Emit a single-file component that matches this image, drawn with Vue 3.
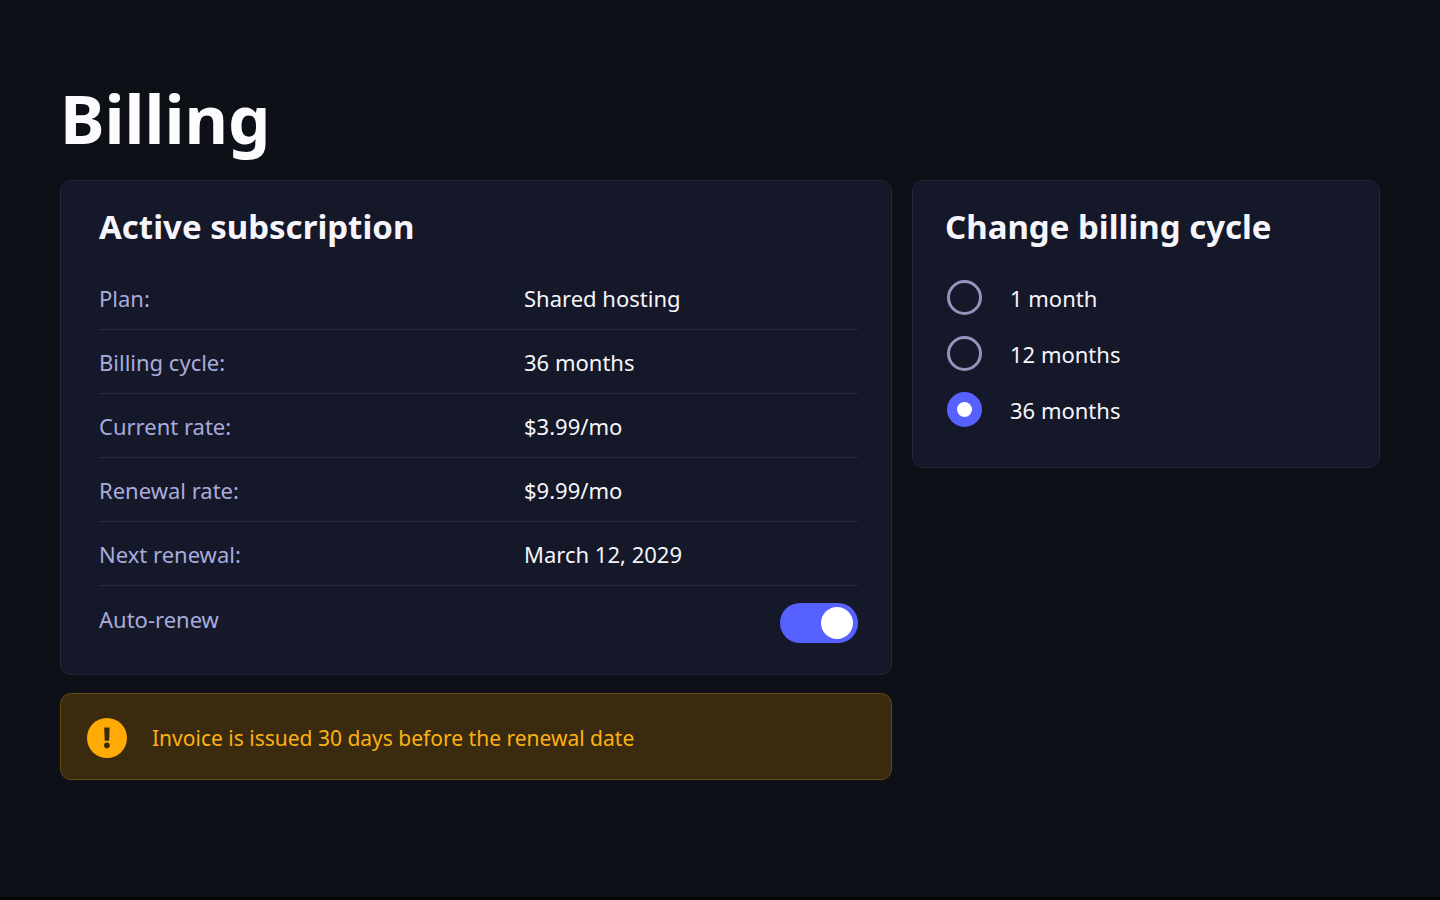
<script setup>
import { ref } from 'vue'

const details = [
  { label: 'Plan:', value: 'Shared hosting' },
  { label: 'Billing cycle:', value: '36 months' },
  { label: 'Current rate:', value: '$3.99/mo' },
  { label: 'Renewal rate:', value: '$9.99/mo' },
  { label: 'Next renewal:', value: 'March 12, 2029' },
]

const cycles = [
  { value: '1', label: '1 month' },
  { value: '12', label: '12 months' },
  { value: '36', label: '36 months' },
]

const cycle = ref('36')
const autoRenew = ref(true)
</script>

<template>
  <main class="page">
    <h1 class="title">Billing</h1>

    <div class="columns">
      <div class="main-column">
        <section class="card subscription" aria-labelledby="subscription-heading">
          <h2 id="subscription-heading" class="heading">Active subscription</h2>
          <dl class="details">
            <div v-for="item in details" :key="item.label" class="row">
              <dt>{{ item.label }}</dt>
              <dd>{{ item.value }}</dd>
            </div>
          </dl>
          <div class="renew">
            <label for="auto-renew">Auto-renew</label>
            <input id="auto-renew" v-model="autoRenew" class="switch" type="checkbox" role="switch" />
          </div>
        </section>

        <aside class="notice">
          <svg class="notice-icon" viewBox="0 0 40 40" aria-hidden="true">
            <circle cx="20" cy="20" r="20" fill="#ffaa05" />
            <path d="M17.2 9.6h5.4l-.5 13.2h-4.4z" fill="#3a2a0f" />
            <circle cx="19.9" cy="27.4" r="2.8" fill="#3a2a0f" />
          </svg>
          <p>Invoice is issued 30 days before the renewal date</p>
        </aside>
      </div>

      <section class="card cycle" aria-labelledby="cycle-heading">
        <h2 id="cycle-heading" class="heading">Change billing cycle</h2>
        <div class="options" role="radiogroup" aria-labelledby="cycle-heading">
          <label v-for="option in cycles" :key="option.value" class="option">
            <input v-model="cycle" class="radio" type="radio" name="cycle" :value="option.value" />
            <span>{{ option.label }}</span>
          </label>
        </div>
      </section>
    </div>
  </main>
</template>

<style>
body {
  background: #0d1017;
}
</style>

<style scoped>
.page {
  box-sizing: border-box;
  min-height: 100vh;
  padding: 70px 60px 48px;
  border-bottom: 3px solid #030408;
  color: #f5f5fb;
  font-family: "Noto Sans", "Open Sans", sans-serif;
  font-size: 22px;
  line-height: 32px;
}

.title {
  margin: 0 0 14px;
  font-size: 67px;
  font-weight: 700;
  line-height: 96px;
  color: #fcfcfe;
}

.columns {
  display: grid;
  grid-template-columns: 16fr 9fr;
  gap: 20px;
  align-items: start;
}

.main-column {
  display: grid;
  gap: 18px;
}

.card {
  border: 1px solid #22263a;
  border-radius: 11px;
  background: #151828;
}

.subscription {
  padding: 22px 33px 31px 38px;
}

.cycle {
  padding: 22px 32px 40px;
}

.heading {
  margin: 0;
  font-size: 33px;
  font-weight: 700;
  line-height: 48px;
}

.details {
  margin: 15px 0 0;
}

.row {
  display: grid;
  grid-template-columns: 14fr 11fr;
  padding: 16px 0 15px;
  border-bottom: 1px solid #262a3f;
}

dt,
.renew label {
  color: #a9abdc;
}

dd {
  margin: 0;
}

.renew {
  display: flex;
  justify-content: space-between;
  align-items: flex-start;
  padding-top: 17px;
}

.switch {
  appearance: none;
  display: flex;
  align-items: center;
  box-sizing: border-box;
  width: 78px;
  height: 40px;
  margin: 0;
  padding: 0 5px;
  border-radius: 20px;
  background: #3a3d5c;
  cursor: pointer;
}

.switch::before {
  content: "";
  width: 32px;
  height: 32px;
  border-radius: 50%;
  background: #ffffff;
}

.switch:checked {
  justify-content: flex-end;
  background: #5661ff;
}

.notice {
  display: flex;
  align-items: center;
  gap: 25px;
  padding: 24px 26px 21px;
  border: 1px solid #674810;
  border-radius: 11px;
  background: #3a2a10;
  color: #fdb112;
}

.notice-icon {
  flex: none;
  width: 40px;
  height: 40px;
}

.notice p {
  margin: 0;
  font-size: 21px;
}

.options {
  display: grid;
  gap: 21px;
  margin-top: 29px;
  padding-left: 2px;
}

.option {
  display: flex;
  align-items: center;
  gap: 28px;
  cursor: pointer;
}

.radio {
  appearance: none;
  display: grid;
  place-items: center;
  box-sizing: border-box;
  width: 35px;
  height: 35px;
  margin: 0;
  border: 3px solid #9294bc;
  border-radius: 50%;
  cursor: pointer;
}

.radio:checked {
  border-color: #5661ff;
  background: #5661ff;
}

.radio:checked::before {
  content: "";
  width: 15px;
  height: 15px;
  border-radius: 50%;
  background: #ffffff;
}

@media (max-width: 900px) {
  .columns {
    grid-template-columns: 1fr;
  }
}
</style>
